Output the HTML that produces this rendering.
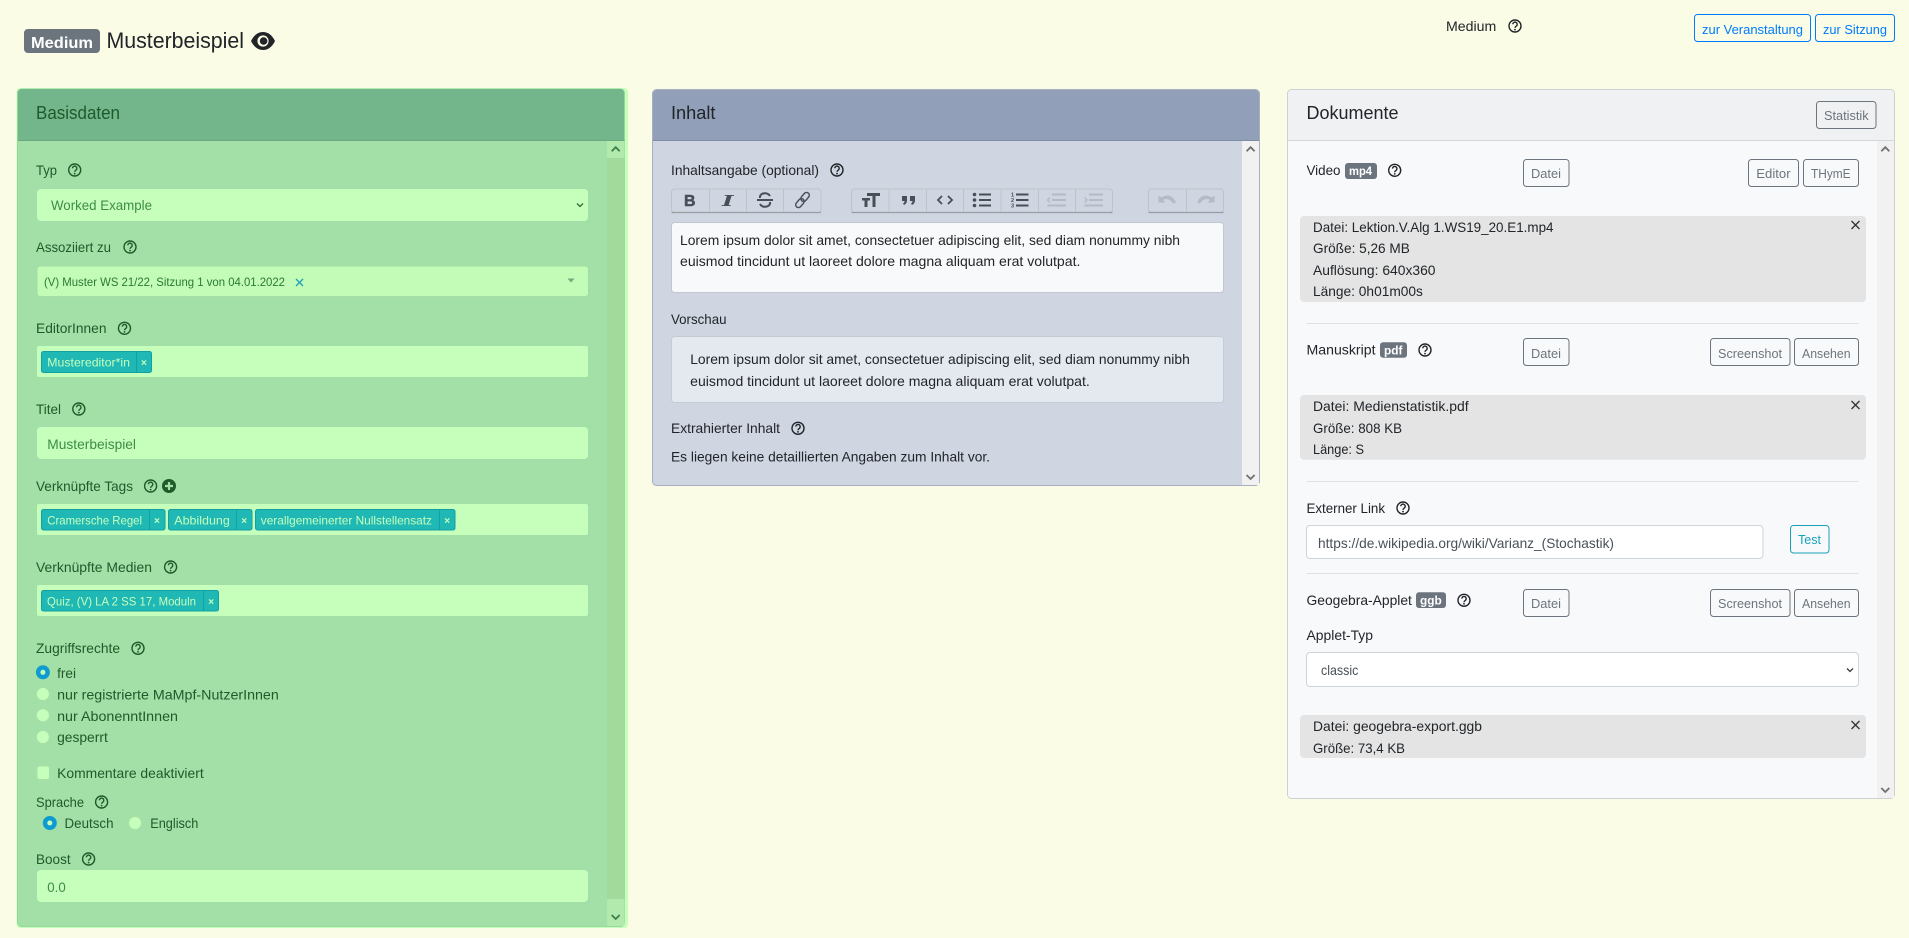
<!DOCTYPE html>
<html lang="de"><head><meta charset="utf-8"><title>Musterbeispiel</title>
<style>
html,body{margin:0;padding:0;background:#fafce5;overflow:hidden}
svg{display:block}
text{font-family:"Liberation Sans",sans-serif;font-size:14px;fill:#212529}
.g{fill:#1f5a2a}.f{fill:#3d8c48}.t{fill:#c6ffbc;font-size:12px}
.x{fill:#c6ffbc;font-size:10px;font-weight:bold}
.h{font-size:18.6px}.b{fill:#6c757d;font-size:13px}.bl{fill:#007bff;font-size:13px}
.w{fill:#fff;font-weight:bold;font-size:11.5px}
.tag{fill:#1fb8b4;stroke:#13a0a4}
.dv{stroke:#13a0a4;stroke-width:1}
.hr{stroke:#dee2e6;stroke-width:1}
.btn{fill:none;stroke:#6c757d}
.tb{fill:#cfd5e1;stroke:#bfc3c9}
.sep{stroke:#bfc3c9}
.ic{stroke:#494f57;fill:none;stroke-width:2}
.off{stroke:#b5bac5;fill:none;stroke-width:2}
</style></head><body>
<svg width="1909" height="938" viewBox="0 0 1909 938" xmlns="http://www.w3.org/2000/svg">
<defs>
<g id="q"><circle r="6" fill="none" stroke="currentColor" stroke-width="1.4"/><path d="M-2.2-1.7a2.2 2.2 0 1 1 3.5 1.8C.4.7 0 1 0 1.9" fill="none" stroke="currentColor" stroke-width="1.4"/><circle cy="3.6" r=".9" fill="currentColor"/></g>
<path id="up" d="M-4 2.2 0-1.8 4 2.2" fill="none" stroke-width="1.800"/>
<path id="dn" d="M-4-2 0 2 4-2" fill="none" stroke-width="1.800"/>
</defs>
<rect width="1909" height="938" fill="#fafce5"/>

<!-- page header -->
<rect x="24" y="29" width="76" height="24" rx="4" fill="#6c757d"/>
<text x="31" y="48" textLength="62" lengthAdjust="spacingAndGlyphs" style="fill:#fff;font-weight:bold;font-size:16px">Medium</text>
<text x="106.5" y="48" textLength="137.5" lengthAdjust="spacingAndGlyphs" style="font-size:22.4px">Musterbeispiel</text>
<path d="M251 41c3-6 7-9 12-9s9 3 12 9c-3 6-7 9-12 9s-9-3-12-9z" fill="#212529"/><circle cx="263" cy="41" r="5.6" fill="#fafce5"/><circle cx="263.6" cy="41" r="3.8" fill="#212529"/>
<text x="1446" y="31" textLength="50.3" lengthAdjust="spacingAndGlyphs">Medium</text>
<use href="#q" x="1515" y="26" style="color:#212529"/>
<rect x="1694.5" y="14.5" width="116" height="27" rx="3" fill="none" stroke="#007bff"/>
<text class="bl" x="1702" y="34" textLength="101" lengthAdjust="spacingAndGlyphs">zur Veranstaltung</text>
<rect x="1815.5" y="14.5" width="79" height="27" rx="3" fill="none" stroke="#007bff"/>
<text class="bl" x="1823" y="34" textLength="64" lengthAdjust="spacingAndGlyphs">zur Sitzung</text>

<!-- Basisdaten card -->
<rect x="16.5" y="88" width="611.5" height="840" rx="4" fill="#c6ffbc"/>
<rect x="17.5" y="89" width="607" height="837.5" rx="4" fill="#a3e0a7" stroke="#8fd095" stroke-width=".8"/>
<path d="M18 141V93a4 4 0 0 1 4-4h598a4 4 0 0 1 4 4v48z" fill="#74b68c"/>
<rect x="18" y="140" width="606.5" height="1" fill="#6aa981"/>
<rect x="607" y="141" width="17.5" height="785" fill="#a1da9b"/>
<rect x="607" y="141" width="17.5" height="17" fill="#b2eaae"/>
<rect x="607" y="899" width="17.5" height="27" fill="#b2eaae"/>
<use href="#up" x="615.7" y="149" stroke="#3f7f4a"/><use href="#dn" x="615.7" y="917" stroke="#3f7f4a"/>
<text class="h" x="36" y="119" textLength="84" lengthAdjust="spacingAndGlyphs" style="fill:#1f5a2a">Basisdaten</text>

<g style="color:#1f5a2a">
<use href="#q" x="74.7" y="170"/><use href="#q" x="130" y="247"/><use href="#q" x="124.5" y="328.3"/><use href="#q" x="78.8" y="409"/><use href="#q" x="150.6" y="486"/><use href="#q" x="170.6" y="567"/><use href="#q" x="138" y="648.3"/><use href="#q" x="101.6" y="802"/><use href="#q" x="88.6" y="859"/>
</g>
<circle cx="169" cy="486" r="7" fill="#1f5a2a"/><path d="M165 486h8M169 482v8" stroke="#a3e0a7" stroke-width="2.2"/>

<text class="g" x="36" y="175" textLength="21" lengthAdjust="spacingAndGlyphs">Typ</text>
<rect x="37" y="189" width="551" height="32" rx="4" fill="#c6ffbc"/>
<text class="f" x="51" y="210" textLength="101" lengthAdjust="spacingAndGlyphs">Worked Example</text>
<path d="M577 203.5l3 3 3-3" fill="none" stroke="#2d6a35" stroke-width="1.3"/>

<text class="g" x="36" y="252" textLength="75" lengthAdjust="spacingAndGlyphs">Assoziiert zu</text>
<rect x="37" y="266" width="551.5" height="30.5" rx="3" fill="#c2fcb6" stroke="#a4dca2"/>
<text x="44" y="286" textLength="241" lengthAdjust="spacingAndGlyphs" style="font-size:12px;fill:#2a7a38">(V) Muster WS 21/22, Sitzung 1 von 04.01.2022</text>
<path d="M296 279l7 7M303 279l-7 7" stroke="#1ea0b8" stroke-width="1.3"/>
<path d="M567.5 278.5h7l-3.500 4z" fill="#7da583"/>

<text class="g" x="36" y="333" textLength="70.500" lengthAdjust="spacingAndGlyphs">EditorInnen</text>
<rect x="37" y="346" width="551" height="31" rx="2" fill="#c6ffbc"/>
<rect class="tag" x="41.500" y="351.500" width="110" height="21" rx="2"/><path class="dv" d="M136.500 352v20"/>
<text class="t" x="47.300" y="366.500" textLength="82.700" lengthAdjust="spacingAndGlyphs">Mustereditor*in</text>
<text class="x" x="141" y="366" >×</text>

<text class="g" x="36" y="414" textLength="25" lengthAdjust="spacingAndGlyphs">Titel</text>
<rect x="37" y="427" width="551" height="32" rx="4" fill="#c6ffbc"/>
<text class="f" x="47.300" y="449" textLength="88.700" lengthAdjust="spacingAndGlyphs">Musterbeispiel</text>

<text class="g" x="36" y="491" textLength="97" lengthAdjust="spacingAndGlyphs">Verknüpfte Tags</text>
<rect x="37" y="504" width="551" height="31" rx="2" fill="#c6ffbc"/>
<rect class="tag" x="41.500" y="509.500" width="123.500" height="20.500" rx="2"/><path class="dv" d="M149.500 510v20"/>
<text class="t" x="47.300" y="524.500" textLength="94.700" lengthAdjust="spacingAndGlyphs">Cramersche Regel</text>
<text class="x" x="154" y="524">×</text>
<rect class="tag" x="168.500" y="509.500" width="83.500" height="20.500" rx="2"/><path class="dv" d="M236.500 510v20"/>
<text class="t" x="174.300" y="524.500" textLength="55.500" lengthAdjust="spacingAndGlyphs">Abbildung</text>
<text class="x" x="241.300" y="524">×</text>
<rect class="tag" x="255.500" y="509.500" width="199.500" height="20.500" rx="2"/><path class="dv" d="M439.500 510v20"/>
<text class="t" x="260.800" y="524.500" textLength="171.200" lengthAdjust="spacingAndGlyphs">verallgemeinerter Nullstellensatz</text>
<text class="x" x="444.300" y="524">×</text>

<text class="g" x="36" y="572" textLength="116" lengthAdjust="spacingAndGlyphs">Verknüpfte Medien</text>
<rect x="37" y="585" width="551" height="31" rx="2" fill="#c6ffbc"/>
<rect class="tag" x="41.500" y="590.500" width="177" height="20.500" rx="2"/><path class="dv" d="M203.500 591v20"/>
<text class="t" x="47" y="605.500" textLength="149" lengthAdjust="spacingAndGlyphs">Quiz, (V) LA 2 SS 17, Moduln</text>
<text class="x" x="208.300" y="605">×</text>

<text class="g" x="36" y="653" textLength="84" lengthAdjust="spacingAndGlyphs">Zugriffsrechte</text>
<circle cx="42.900" cy="672.300" r="7" fill="#0f9bcf"/><circle cx="42.900" cy="672.300" r="2.500" fill="#c6ffbc"/>
<circle cx="42.900" cy="694" r="6.500" fill="#c6ffbc" stroke="#a9e0a6"/>
<circle cx="42.900" cy="715.300" r="6.500" fill="#c6ffbc" stroke="#a9e0a6"/>
<circle cx="42.900" cy="737" r="6.500" fill="#c6ffbc" stroke="#a9e0a6"/>
<text class="g" x="57.100" y="678" textLength="18.900" lengthAdjust="spacingAndGlyphs">frei</text>
<text class="g" x="57.100" y="699.300" textLength="221.700" lengthAdjust="spacingAndGlyphs">nur registrierte MaMpf-NutzerInnen</text>
<text class="g" x="57.100" y="721" textLength="120.900" lengthAdjust="spacingAndGlyphs">nur AbonenntInnen</text>
<text class="g" x="57.100" y="742" textLength="50.700" lengthAdjust="spacingAndGlyphs">gesperrt</text>
<rect x="37" y="766" width="12.500" height="13.500" rx="2.500" fill="#c6ffbc" stroke="#a9e0a6"/>
<text class="g" x="57.100" y="778" textLength="146.600" lengthAdjust="spacingAndGlyphs">Kommentare deaktiviert</text>

<text class="g" x="36" y="807" textLength="48" lengthAdjust="spacingAndGlyphs">Sprache</text>
<circle cx="49.800" cy="823" r="7" fill="#0f9bcf"/><circle cx="49.800" cy="823" r="2.500" fill="#c6ffbc"/>
<text class="g" x="64.500" y="828" textLength="49" lengthAdjust="spacingAndGlyphs">Deutsch</text>
<circle cx="135" cy="823" r="6.500" fill="#c6ffbc" stroke="#a9e0a6"/>
<text class="g" x="150.200" y="828" textLength="48.200" lengthAdjust="spacingAndGlyphs">Englisch</text>

<text class="g" x="36" y="864" textLength="34.600" lengthAdjust="spacingAndGlyphs">Boost</text>
<rect x="37" y="870" width="551" height="32" rx="4" fill="#c6ffbc"/>
<text class="f" x="47.300" y="892" textLength="18.400" lengthAdjust="spacingAndGlyphs">0.0</text>

<!-- Inhalt card -->
<rect x="652.500" y="89.500" width="607" height="396" rx="4" fill="#cfd5e1" stroke="#a7afc0"/>
<path d="M653 141V94a4 4 0 0 1 4-4h598a4 4 0 0 1 4 4v47z" fill="#919fb9"/>
<rect x="653" y="140" width="606" height="1" fill="#7e8ba5"/>
<rect x="1242" y="141" width="17" height="344" fill="#f1f1f1"/>
<use href="#up" x="1250.600" y="149" stroke="#707070"/><use href="#dn" x="1250.600" y="477" stroke="#707070"/>
<text class="h" x="671" y="119" textLength="44.500" lengthAdjust="spacingAndGlyphs">Inhalt</text>

<text x="671" y="175" textLength="148" lengthAdjust="spacingAndGlyphs">Inhaltsangabe (optional)</text>
<use href="#q" x="837" y="170" style="color:#212529"/>

<rect class="tb" x="671.500" y="189" width="149.500" height="23.500" rx="3"/>
<path d="M671.500 212.500h149.500" stroke="#9a9da2" stroke-width="1.200"/>
<path class="sep" d="M709.500 189v23M746.500 189v23M783.500 189v23"/>
<rect class="tb" x="851.500" y="189" width="261" height="23.500" rx="3"/>
<path d="M851.500 212.500h261" stroke="#9a9da2" stroke-width="1.200"/>
<path class="sep" d="M889 189v23M926.500 189v23M963.500 189v23M1001 189v23M1038.500 189v23M1075.500 189v23"/>
<rect class="tb" x="1148.500" y="189" width="75" height="23.500" rx="3"/>
<path d="M1148.500 212.500h75" stroke="#9a9da2" stroke-width="1.200"/>
<path class="sep" d="M1186.500 189v23"/>

<text x="684" y="206" textLength="11.500" lengthAdjust="spacingAndGlyphs" style="font-weight:bold;font-size:15.500px;fill:#494f57;stroke:#494f57;stroke-width:.5">B</text>
<text x="722" y="206" textLength="11.500" lengthAdjust="spacingAndGlyphs" style="font-family:'DejaVu Serif',serif;font-weight:bold;font-style:italic;font-size:15px;fill:#494f57">I</text>
<path class="ic" d="M757 200h16" /><path class="ic" d="M760 198c-.5-3 2-4.800 5-4.800 2.300 0 4 1 5 2.800M770 202c.5 3-2 4.800-5 4.800-2.300 0-4-1-5-2.800"/>
<g class="ic" style="stroke-width:1.500" transform="translate(802.500 200) rotate(40)"><rect x="-2.800" y="-9" width="5.600" height="10" rx="2.800"/><rect x="-2.800" y="-1" width="5.600" height="10" rx="2.800"/></g>
<path d="M867 193h13v3h-4.500v11h-3v-11H867zM862 198h8v2.500h-2.500v6.500h-3v-6.500H862z" fill="#494f57"/>
<path d="M902 196h5v4.500c0 2-1 3.500-3 4.500l-1-1.500c1-.5 1.500-1.200 1.500-2.500H902zM910 196h5v4.500c0 2-1 3.500-3 4.500l-1-1.500c1-.5 1.500-1.200 1.500-2.500H910z" fill="#494f57"/>
<path class="ic" d="M942 196l-4 4 4 4M948 196l4 4-4 4" style="stroke-width:1.800"/>
<g fill="#494f57"><circle cx="974.500" cy="194.500" r="1.800"/><circle cx="974.500" cy="200" r="1.800"/><circle cx="974.500" cy="205.500" r="1.800"/></g>
<path class="ic" d="M979 194.500h12M979 200h12M979 205.500h12"/>
<g style="font-size:5.500px;font-weight:bold"><text x="1011" y="196.500" style="font-size:5.500px;fill:#494f57">1</text><text x="1011" y="202" style="font-size:5.500px;fill:#494f57">2</text><text x="1011" y="207.500" style="font-size:5.500px;fill:#494f57">3</text></g>
<path class="ic" d="M1016 194.500h12.500M1016 200h12.500M1016 205.500h12.500"/>
<path class="off" d="M1052 194.500h14M1052 200h14M1047.500 205.500h18.500"/><path class="off" d="M1050 197.500l-2.500 2.500 2.500 2.500" style="stroke-width:1.400"/>
<path class="off" d="M1089 194.500h14M1089 200h14M1084.500 205.500h18.500"/><path class="off" d="M1084.500 197.500l2.500 2.500-2.500 2.500" style="stroke-width:1.400"/>
<path d="M1158.500 195.500v7h7l-2.500-2.500c3-2 7-1 10 3.500l3-1c-3-7-9-9-14.500-5z" fill="#b5bac5"/>
<path d="M1214.500 195.500v7h-7l2.500-2.500c-3-2-7-1-10 3.500l-3-1c3-7 9-9 14.500-5z" fill="#b5bac5"/>

<rect x="671.500" y="222.500" width="552" height="70" rx="3" fill="#f8f9fa" stroke="#c2c6cd"/>
<text x="680" y="245" textLength="500" lengthAdjust="spacingAndGlyphs">Lorem ipsum dolor sit amet, consectetuer adipiscing elit, sed diam nonummy nibh</text>
<text x="680" y="266" textLength="400.400" lengthAdjust="spacingAndGlyphs">euismod tincidunt ut laoreet dolore magna aliquam erat volutpat.</text>
<text x="671" y="324" textLength="55.500" lengthAdjust="spacingAndGlyphs">Vorschau</text>
<rect x="671.500" y="336.500" width="552" height="66" rx="3" fill="#e4e8ef" stroke="#c6cad2"/>
<text x="690.200" y="364" textLength="499.600" lengthAdjust="spacingAndGlyphs">Lorem ipsum dolor sit amet, consectetuer adipiscing elit, sed diam nonummy nibh</text>
<text x="690.200" y="386" textLength="399.600" lengthAdjust="spacingAndGlyphs">euismod tincidunt ut laoreet dolore magna aliquam erat volutpat.</text>
<text x="671" y="433" textLength="109" lengthAdjust="spacingAndGlyphs">Extrahierter Inhalt</text>
<use href="#q" x="798" y="428.300" style="color:#212529"/>
<text x="671" y="461.500" textLength="319" lengthAdjust="spacingAndGlyphs">Es liegen keine detaillierten Angaben zum Inhalt vor.</text>

<!-- Dokumente card -->
<rect x="1287.500" y="89.500" width="607" height="709" rx="4" fill="#f8f9fb" stroke="#cdd0d4"/>
<path d="M1288 140V94a4 4 0 0 1 4-4h598a4 4 0 0 1 4 4v46z" fill="#f0f1f3"/>
<rect x="1288" y="140" width="606" height="1" fill="#d3d6da"/>
<rect x="1877" y="141" width="17" height="657" fill="#f1f1f1"/>
<use href="#up" x="1885.300" y="149" stroke="#707070"/><use href="#dn" x="1885.300" y="790" stroke="#707070"/>
<text class="h" x="1306.500" y="119" textLength="92" lengthAdjust="spacingAndGlyphs">Dokumente</text>
<rect class="btn" x="1816.500" y="101.500" width="59.500" height="27" rx="3"/>
<text class="b" x="1824" y="120" textLength="44.600" lengthAdjust="spacingAndGlyphs">Statistik</text>

<text x="1306.500" y="175" textLength="34" lengthAdjust="spacingAndGlyphs">Video</text>
<rect x="1345" y="163" width="32" height="16" rx="3" fill="#6c757d"/>
<text class="w" x="1349" y="175" textLength="23" lengthAdjust="spacingAndGlyphs">mp4</text>
<use href="#q" x="1394.700" y="170.300" style="color:#212529"/>
<rect class="btn" x="1523.500" y="159.500" width="45.500" height="27" rx="3"/>
<text class="b" x="1531" y="178" textLength="30" lengthAdjust="spacingAndGlyphs">Datei</text>
<rect class="btn" x="1748.500" y="159.500" width="50" height="27" rx="3"/>
<text class="b" x="1756.300" y="178" textLength="34.300" lengthAdjust="spacingAndGlyphs">Editor</text>
<rect class="btn" x="1803.500" y="159.500" width="55" height="27" rx="3"/>
<text class="b" x="1811" y="178" textLength="39.600" lengthAdjust="spacingAndGlyphs">THymE</text>

<rect x="1300" y="216" width="566" height="86" rx="4" fill="#e4e4e4"/>
<text x="1313" y="232" textLength="240.500" lengthAdjust="spacingAndGlyphs">Datei: Lektion.V.Alg 1.WS19_20.E1.mp4</text>
<text x="1313" y="253" textLength="96.800" lengthAdjust="spacingAndGlyphs">Größe: 5,26 MB</text>
<text x="1313" y="275" textLength="122.500" lengthAdjust="spacingAndGlyphs">Auflösung: 640x360</text>
<text x="1313" y="296" textLength="109.900" lengthAdjust="spacingAndGlyphs">Länge: 0h01m00s</text>
<path d="M1851.500 221l8 8M1859.500 221l-8 8" stroke="#333" stroke-width="1.300"/>

<path class="hr" d="M1306.500 323.500h552"/>
<text x="1306.500" y="354.500" textLength="69" lengthAdjust="spacingAndGlyphs">Manuskript</text>
<rect x="1380" y="342.300" width="27" height="15.500" rx="3" fill="#6c757d"/>
<text class="w" x="1384" y="354.500" textLength="18.500" lengthAdjust="spacingAndGlyphs">pdf</text>
<use href="#q" x="1425" y="350" style="color:#212529"/>
<rect class="btn" x="1523.500" y="338.500" width="45.500" height="27" rx="3"/>
<text class="b" x="1531" y="358" textLength="30" lengthAdjust="spacingAndGlyphs">Datei</text>
<rect class="btn" x="1710.500" y="338.500" width="79.500" height="27" rx="3"/>
<text class="b" x="1718" y="358" textLength="64" lengthAdjust="spacingAndGlyphs">Screenshot</text>
<rect class="btn" x="1794.500" y="338.500" width="64" height="27" rx="3"/>
<text class="b" x="1802" y="358" textLength="48.600" lengthAdjust="spacingAndGlyphs">Ansehen</text>

<rect x="1300" y="395" width="566" height="64.700" rx="4" fill="#e4e4e4"/>
<text x="1313" y="411" textLength="155.600" lengthAdjust="spacingAndGlyphs">Datei: Medienstatistik.pdf</text>
<text x="1313" y="433" textLength="89" lengthAdjust="spacingAndGlyphs">Größe: 808 KB</text>
<text x="1313" y="454" textLength="51" lengthAdjust="spacingAndGlyphs">Länge: S</text>
<path d="M1851.500 401l8 8M1859.500 401l-8 8" stroke="#333" stroke-width="1.300"/>

<path class="hr" d="M1306.500 481.500h552"/>
<text x="1306.500" y="513" textLength="78.500" lengthAdjust="spacingAndGlyphs">Externer Link</text>
<use href="#q" x="1403" y="508" style="color:#212529"/>
<rect x="1306.500" y="525.500" width="456.500" height="33" rx="3.500" fill="#fff" stroke="#ced4da"/>
<text x="1318" y="548" textLength="296" lengthAdjust="spacingAndGlyphs" style="fill:#495057">https://de.wikipedia.org/wiki/Varianz_(Stochastik)</text>
<rect x="1790.500" y="525.500" width="38.500" height="27.500" rx="3" fill="none" stroke="#17a2b8"/>
<text x="1798" y="544" textLength="23" lengthAdjust="spacingAndGlyphs" style="fill:#17a2b8;font-size:13px">Test</text>

<path class="hr" d="M1306.500 573.500h552"/>
<text x="1306.500" y="605" textLength="105.400" lengthAdjust="spacingAndGlyphs">Geogebra-Applet</text>
<rect x="1416" y="592.300" width="30" height="15.700" rx="3" fill="#6c757d"/>
<text class="w" x="1420" y="604.500" textLength="21.700" lengthAdjust="spacingAndGlyphs">ggb</text>
<use href="#q" x="1464" y="600.300" style="color:#212529"/>
<rect class="btn" x="1523.500" y="589.500" width="45.500" height="27" rx="3"/>
<text class="b" x="1531" y="608" textLength="30" lengthAdjust="spacingAndGlyphs">Datei</text>
<rect class="btn" x="1710.500" y="589.500" width="79.500" height="27" rx="3"/>
<text class="b" x="1718" y="608" textLength="64" lengthAdjust="spacingAndGlyphs">Screenshot</text>
<rect class="btn" x="1794.500" y="589.500" width="64" height="27" rx="3"/>
<text class="b" x="1802" y="608" textLength="48.600" lengthAdjust="spacingAndGlyphs">Ansehen</text>

<text x="1306.500" y="640" textLength="66.500" lengthAdjust="spacingAndGlyphs">Applet-Typ</text>
<rect x="1306.500" y="652.500" width="552" height="34" rx="3.500" fill="#fff" stroke="#ced4da"/>
<text x="1321" y="675" textLength="37.400" lengthAdjust="spacingAndGlyphs" style="fill:#495057">classic</text>
<path d="M1847 668.500l3 3 3-3" fill="none" stroke="#343a40" stroke-width="1.300"/>

<rect x="1300" y="715" width="566" height="43" rx="4" fill="#e4e4e4"/>
<text x="1313" y="731" textLength="169" lengthAdjust="spacingAndGlyphs">Datei: geogebra-export.ggb</text>
<text x="1313" y="753" textLength="92" lengthAdjust="spacingAndGlyphs">Größe: 73,4 KB</text>
<path d="M1851.500 721l8 8M1859.500 721l-8 8" stroke="#333" stroke-width="1.300"/>
</svg>
</body></html>
